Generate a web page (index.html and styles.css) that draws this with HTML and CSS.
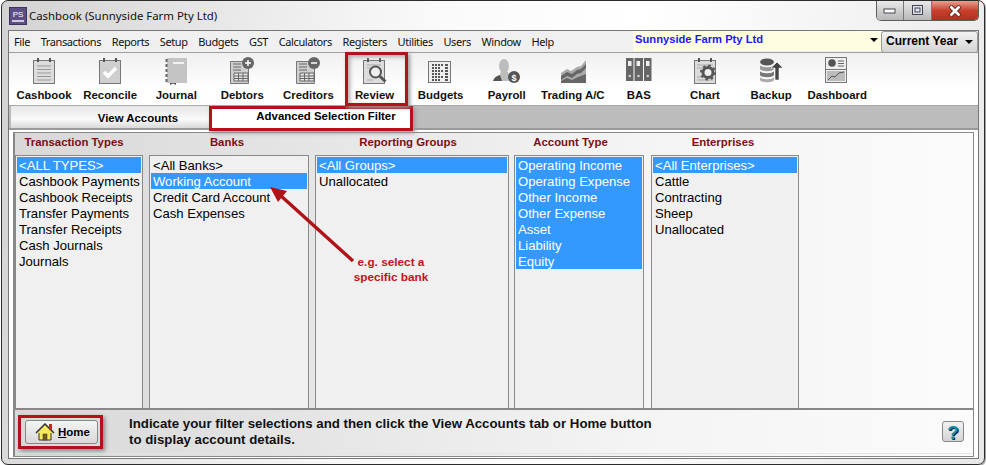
FILE: index.html
```html
<!DOCTYPE html>
<html lang="en">
<head>
<meta charset="utf-8">
<title>Cashbook</title>
<link rel="stylesheet" href="styles.css">
</head>
<body>
<div class="window">
  <header class="titlebar">
    <svg class="app-icon" width="18" height="18" viewBox="0 0 18 18"><rect x=".5" y=".5" width="17" height="17" fill="#5d4f86" stroke="#3c3360"/><text x="9" y="10" text-anchor="middle" font-family="Liberation Sans" font-size="8" fill="#fff">PS</text><rect x="3" y="13" width="12" height="2" fill="#cfc9de"/></svg>
    <span class="title">Cashbook (Sunnyside Farm Pty Ltd)</span>
    <div class="controls">
      <span class="ctl"><svg width="14" height="8" viewBox="0 0 14 8"><rect x="1" y="2" width="11" height="4" fill="#fff" stroke="#445"/></svg></span>
      <span class="ctl"><svg width="12" height="11" viewBox="0 0 12 11"><rect x=".5" y=".5" width="10" height="9" fill="#dfe4ea" stroke="#445"/><rect x="3" y="3" width="5" height="4" fill="none" stroke="#445"/></svg></span>
      <span class="ctl close"><svg width="14" height="12" viewBox="0 0 14 12"><path d="M2 1l10 10M12 1L2 11" stroke="#5b2018" stroke-width="4.4"/><path d="M2.5 1.5l9 9M11.500 1.500l-9 9" stroke="#fff" stroke-width="2.6"/></svg></span>
    </div>
  </header>
  <div class="frame">
    <nav class="menubar">
      <span class="m m1">File</span><span class="m">Transactions</span><span class="m">Reports</span><span class="m">Setup</span><span class="m">Budgets</span><span class="m">GST</span><span class="m">Calculators</span><span class="m">Registers</span><span class="m">Utilities</span><span class="m">Users</span><span class="m">Window</span><span class="m">Help</span>
      <div class="company"><span>Sunnyside Farm Pty Ltd</span><i class="caret"></i></div>
      <div class="year"><span>Current Year</span><i class="caret"></i></div>
    </nav>
    <div class="toolbar">
      <div class="tool"><svg width="28" height="28" viewBox="0 0 28 28"><rect x="3.500" y="3.500" width="21" height="23" fill="#dcdcdc" stroke="#777"/><path d="M8 1v4M20 1v4" stroke="#555" stroke-width="2"/><path d="M7 9h14M7 12.500h14M7 16h14M7 19.500h14M7 23h14" stroke="#999"/></svg><span>Cashbook</span></div>
      <div class="tool"><svg width="28" height="28" viewBox="0 0 28 28"><rect x="3.500" y="3.500" width="21" height="23" fill="#cfcfcf" stroke="#777"/><path d="M8 1v4M20 1v4" stroke="#555" stroke-width="2"/><path d="M8 15l4 4 8-8" fill="none" stroke="#fff" stroke-width="3.500"/></svg><span>Reconcile</span></div>
      <div class="tool"><svg width="28" height="28" viewBox="0 0 28 28"><rect x="5" y="1" width="20" height="25" fill="#c4c4c4"/><path d="M4.500 2v24" stroke="#666" stroke-width="2" stroke-dasharray="3 2"/><rect x="11" y="5" width="11" height="2" fill="#f2f2f2"/><path d="M8 26h6v2l-3-1.500-3 1.500z" fill="#555"/></svg><span>Journal</span></div>
      <div class="tool"><svg width="28" height="28" viewBox="0 0 28 28"><path d="M2.500 4.500h18v22h-18z" fill="#cfcfcf" stroke="#777"/><path d="M5 7h8M5 10h8M5 13h8" stroke="#666"/><path d="M6 16h14v8H6zM6 19h14M6 21.500h14M10.500 16v8M15 16v8" fill="#e6e6e6" stroke="#666"/><circle cx="20" cy="6" r="6" fill="#666"/><path d="M17 6h6M20 3v6" stroke="#fff" stroke-width="1.500"/></svg><span>Debtors</span></div>
      <div class="tool"><svg width="28" height="28" viewBox="0 0 28 28"><path d="M2.500 4.500h18v22h-18z" fill="#cfcfcf" stroke="#777"/><path d="M5 7h8M5 10h8M5 13h8" stroke="#666"/><path d="M6 16h14v8H6zM6 19h14M6 21.500h14M10.500 16v8M15 16v8" fill="#e6e6e6" stroke="#666"/><circle cx="20" cy="6" r="6" fill="#666"/><path d="M17 6h6" stroke="#fff" stroke-width="1.500"/></svg><span>Creditors</span></div>
      <div class="tool"><svg width="28" height="28" viewBox="0 0 28 28"><rect x="2.500" y="3.500" width="21" height="23" fill="#dcdcdc" stroke="#777"/><path d="M7 1v4M19 1v4" stroke="#555" stroke-width="2"/><path d="M6 8h14M6 11h6M6 23h6" stroke="#aaa"/><circle cx="14.500" cy="15" r="5.500" fill="#eee" stroke="#555" stroke-width="2"/><path d="M18.500 19l6 5.500" stroke="#555" stroke-width="3"/></svg><span>Review</span></div>
      <div class="tool"><svg width="28" height="28" viewBox="0 0 28 28"><rect x="1.500" y="4.500" width="22" height="21" fill="#eee" stroke="#777"/><path d="M5 8h2M8 8h2M11 8h2M14 8h2M18 8h3M5 11h2M8 11h2M11 11h2M18 11h3M5 14h2M8 14h2M11 14h2M14 14h2M18 14h3M5 17h2M8 17h2M11 17h2M18 17h3M5 20h2M8 20h2M11 20h2M14 20h2M18 20h3M5 23h2M8 23h2M11 23h2M18 23h3" stroke="#555" stroke-width="2"/></svg><span>Budgets</span></div>
      <div class="tool"><svg width="28" height="28" viewBox="0 0 28 28"><ellipse cx="11" cy="9" rx="5" ry="7" fill="#bdbdbd"/><path d="M8 14l-1 4c-4 1-6 3-7 6h19l-4-9z" fill="#bdbdbd"/><path d="M0 24c1-3 3-5 7-6l2 6z" fill="#555"/><circle cx="21" cy="20" r="6" fill="#555"/><text x="21" y="23.500" text-anchor="middle" font-family="Liberation Sans" font-size="9" font-weight="700" fill="#fff">$</text></svg><span>Payroll</span></div>
      <div class="tool"><svg width="28" height="28" viewBox="0 0 28 28"><path d="M2 16l6-4 4 2 6-4 4-1 5-6v23H2z" fill="#aaa"/><path d="M2 19l6-4 5 2 5-4 4-1 5-5v4l-5 5-4 1-5 4-5-2-6 4z" fill="#666"/><path d="M2 24l6-3 5 2 6-3 8-3v9H2z" fill="#666"/></svg><span>Trading A/C</span></div>
      <div class="tool"><svg width="28" height="28" viewBox="0 0 28 28"><path d="M1 1h7.500v23H1zM9.500 1H18v23H9.500zM19 1h7.500v23H19z" fill="#666"/><path d="M3 4h3.500v5H3zM11.500 4H15v5h-3.500zM21 4h3.500v5H21z" fill="#eee"/><circle cx="4.800" cy="19" r="1.300" fill="#ccc"/><circle cx="13.500" cy="19" r="1.300" fill="#ccc"/><circle cx="22.800" cy="19" r="1.300" fill="#ccc"/></svg><span>BAS</span></div>
      <div class="tool"><svg width="28" height="28" viewBox="0 0 28 28"><rect x="3.500" y="3.500" width="21" height="23" fill="#dcdcdc" stroke="#777"/><path d="M8 1v4M20 1v4" stroke="#555" stroke-width="2"/><path d="M6 8h16M6 11h16M6 20h16M6 23h16" stroke="#aaa"/><circle cx="17" cy="15.500" r="5" fill="#eee" stroke="#555" stroke-width="3"/><circle cx="17" cy="15.500" r="7" fill="none" stroke="#555" stroke-width="2" stroke-dasharray="2.500 3"/></svg><span>Chart</span></div>
      <div class="tool"><svg width="28" height="28" viewBox="0 0 28 28"><ellipse cx="10" cy="5" rx="7" ry="3.500" fill="#555"/><path d="M3 8c1 3 13 3 14 0v4c-1 3-13 3-14 0z" fill="#999"/><path d="M3 14c1 3 13 3 14 0v4c-1 3-13 3-14 0z" fill="#777"/><path d="M3 20c1 3 13 3 14 0v3c-1 3-13 3-14 0z" fill="#aaa"/><path d="M20 5l6 6h-4v12h-4V11h-4z" fill="#444" stroke="#fff" stroke-width=".6"/></svg><span>Backup</span></div>
      <div class="tool"><svg width="28" height="28" viewBox="0 0 28 28"><rect x="2.500" y=".5" width="21" height="25" fill="#eee" stroke="#777"/><path d="M2.500 12.500h21" stroke="#777"/><circle cx="9" cy="6" r="3.800" fill="#555"/><path d="M15 4h6M15 6.500h6M15 9h6" stroke="#666"/><rect x="4" y="14" width="18" height="10" fill="#bbb"/><path d="M5 23l4-4 3 1 4-4 5-1" fill="none" stroke="#555"/></svg><span>Dashboard</span></div>
    </div>
    <div class="tabs">
      <div class="tab">View Accounts</div>
      <div class="tab tab-active">Advanced Selection Filter</div>
    </div>
    <main class="panel">
      <div class="columns">
        <section class="col c-types"><h2>Transaction Types</h2>
          <ul class="list"><li class="sel">&lt;ALL TYPES&gt;</li><li>Cashbook Payments</li><li>Cashbook Receipts</li><li>Transfer Payments</li><li>Transfer Receipts</li><li>Cash Journals</li><li>Journals</li></ul></section>
        <section class="col c-banks"><h2>Banks</h2>
          <ul class="list"><li>&lt;All Banks&gt;</li><li class="sel">Working Account</li><li>Credit Card Account</li><li>Cash Expenses</li></ul></section>
        <section class="col c-groups"><h2>Reporting Groups</h2>
          <ul class="list"><li class="sel">&lt;All Groups&gt;</li><li>Unallocated</li></ul></section>
        <section class="col c-acct"><h2>Account Type</h2>
          <ul class="list"><li class="sel">Operating Income</li><li class="sel">Operating Expense</li><li class="sel">Other Income</li><li class="sel">Other Expense</li><li class="sel">Asset</li><li class="sel">Liability</li><li class="sel">Equity</li></ul></section>
        <section class="col c-ent"><h2>Enterprises</h2>
          <ul class="list"><li class="sel">&lt;All Enterprises&gt;</li><li>Cattle</li><li>Contracting</li><li>Sheep</li><li>Unallocated</li></ul></section>
      </div>
      <footer class="bottom">
        <div class="home-wrap"><button class="home" type="button"><svg width="20" height="18" viewBox="0 0 20 18"><path d="M4 9v8h12V9z" fill="#f5e85a" stroke="#333"/><path d="M1 10l9-9 9 9" fill="#f5e85a" stroke="#333" stroke-width="1.500"/><rect x="14" y="1" width="3" height="6" fill="#c22"/><rect x="8" y="11" width="4" height="6" fill="#7a5a20" stroke="#333" stroke-width=".5"/></svg><span><u>H</u>ome</span></button></div>
        <p class="hint">Indicate your filter selections and then click the View Accounts tab or Home button<br>to display account details.</p>
        <button class="help" type="button">?</button>
      </footer>
    </main>
  </div>
  <svg class="arrow" width="100" height="100" viewBox="0 0 100 100"><path d="M87 80L14 14" stroke="#b01218" stroke-width="3.400"/><path d="M4 6l17 4-9 11z" fill="#b01218"/></svg>
  <div class="note">e.g. select a<br>specific bank</div>
  <div class="callout call-review"></div>
</div>
</body>
</html>
```
FILE: styles.css
```css
* { box-sizing: border-box; }
html, body { margin: 0; padding: 0; background: #fff; }
body { width: 986px; height: 465px; overflow: hidden; font-family: "Liberation Sans", Arial, sans-serif; color: #000; }

.window {
  position: relative;
  width: 984px;
  height: 465px;
  margin-left: 1px;
  padding: 0 6px 6px 6px;
  border: 1px solid #2c2c2c;
  border-radius: 7px;
  background: linear-gradient(100deg, #d2d2d2 0%, #ececec 25%, #f9f9f9 40%, #fff 60%, #e8e8e8 100%);
  box-shadow: 1px 1px 1px #999;
}
.titlebar { display: flex; align-items: center; height: 29px; padding-left: 1px; }
.app-icon { flex: none; margin-right: 3px; margin-top: 1px; }
.title { font-family: "Noto Sans", sans-serif; font-size: 11.400px; color: #111; margin-left: -1px; }
.controls { display: flex; margin-left: auto; align-self: flex-start; height: 20px; border: 1px solid #5d5d5d; border-top: 0; border-radius: 0 0 5px 5px; overflow: hidden; margin-right: -1px; width: 103px; }
.ctl { display: flex; align-items: center; justify-content: center; width: 28px; background: linear-gradient(#e8e8e8, #d0d0d0 50%, #b8b8b8); border-right: 1px solid #777; }
.close { width: 47px; border: 0; background: linear-gradient(#e8a090, #c8402c 50%, #b03020); }

.frame { width: 971px; height: 429px; border: 1px solid #777; background: #fff; }
.menubar { display: flex; height: 22px; background: #f0f0f0; border-bottom: 1px solid #a0a0a0; font-family: "Noto Sans", sans-serif; font-size: 11px; align-items: center; padding-left: 5px; position: relative; }
.m { margin-right: 10.700px; letter-spacing: -.4px; color: #111; }
.company { display: flex; align-items: flex-start; justify-content: space-between; margin-left: auto; width: 248px; height: 20px; padding: 2px 3px 0 2px; background: #fdfde2; align-self: flex-start; font: 700 11.200px "Liberation Sans", sans-serif; color: #1a1aee; letter-spacing: 0; }
.year { display: flex; align-items: center; justify-content: space-between; width: 97px; height: 22px; align-self: flex-start; padding: 0 4px 2px; border: 1px solid #999; border-radius: 3px; background: linear-gradient(#f2f2f2, #d4d4d4); font: 700 12px "Liberation Sans", sans-serif; position: relative; }
.caret { width: 0; height: 0; margin-top: 5px; border: 4px solid transparent; border-top: 4px solid #000; border-bottom: 0; }
.year .caret { margin-top: 2px; }

.toolbar { display: flex; height: 53px; padding: 3px 0 0 2px; background: linear-gradient(#f0f0f0, #fff 70%); border-bottom: 1px solid #aaa; }
.tool { display: flex; flex-direction: column; align-items: center; width: 66.100px; font-weight: 700; font-size: 11.400px; color: #111; white-space: nowrap; }
.tool svg { display: block; height: 30px; margin-bottom: 3px; }

.tabs { display: flex; height: 24px; padding-left: 2px; background: #bcbcbc; border-bottom: 2px solid #9a9a9a; }
.tab { width: 198px; height: 22px; padding: 6px 0 0 56px; text-align: center; font-weight: 700; font-size: 11.400px; background: linear-gradient(#e6e6e6, #fafafa 60%, #d9d9d9); }
.tab-active { position: relative; width: 204px; height: 25px; padding: 1px 0 0 30px; background: #fff; border: 3px solid #b3121a; box-shadow: 2px 2px 4px #999; }

.panel { margin: 2px 4px 0 4px; height: 325px; border: 1px solid #888; background: linear-gradient(90deg, #d8d8d8, #f4f4f4 65%, #fbfbfb); border-left-width: 2px; }
.columns { display: flex; height: 277px; padding-left: 0; border-bottom: 2px solid #888; }
.col { display: flex; flex-direction: column; flex: none; margin-right: 6px; }
.col h2 { margin: 3px 0 0; height: 19px; text-align: center; font-size: 11.400px; font-weight: 700; color: #7b0f14; white-space: nowrap; }
.c-types { width: 128px; }
.c-types h2 { padding-right: 10px; }
.c-banks { width: 160px; }
.c-banks h2 { padding-right: 4px; }
.c-groups { width: 194px; margin-right: 5px; }
.c-groups h2 { padding-right: 8px; }
.c-acct { width: 130px; margin-right: 7px; }
.c-acct h2 { padding-right: 17px; }
.c-ent { width: 148px; }
.c-ent h2 { padding-right: 4px; }
.list { flex: 1; margin: 0; padding: 1px; list-style: none; background: #f0f0f0; border: 1px solid #8a8a8a; border-bottom: 0; font-size: 13.100px; }
.list li { height: 16px; line-height: 18px; padding-left: 2px; white-space: nowrap; }
.list li.sel { background: #3399ff; color: #fff; }

.bottom { display: flex; align-items: center; height: 44px; padding: 0 9px 0 3px; border-bottom: 1px solid #e4e4e4; }
.home-wrap { flex: none; width: 85px; height: 34px; padding: 2px 4px; border: 3px solid #b3121a; box-shadow: 2px 2px 4px #888; margin-right: 26px; margin-top: 0; }
.home { display: flex; align-items: center; gap: 3px; width: 73px; height: 24px; padding: 0 0 0 9px; border: 1px solid #888; border-radius: 3px; background: linear-gradient(#f4f4f4, #d8d8d8); font: 700 11.500px "Liberation Sans", sans-serif; }
.hint { flex: none; margin: 0; font-size: 13.270px; font-weight: 700; line-height: 16px; color: #111; }
.help { margin-left: auto; width: 22px; height: 21px; padding: 0; border: 1px solid #888; border-radius: 3px; background: linear-gradient(#f2f2f2, #d4d4d4); font: 700 19px "Liberation Sans", sans-serif; color: #0a8fa8; text-shadow: 1px 1px 0 #124; }

.arrow { position: absolute; left: 264px; top: 180px; }
.note { position: absolute; left: 339px; top: 254px; width: 100px; text-align: center; font-size: 11.800px; line-height: 15px; font-weight: 700; color: #c3141c; }
.callout { position: absolute; border: 3px solid #b3121a; box-shadow: 2px 2px 4px #999, inset 2px 2px 4px #aaa; pointer-events: none; }
.call-review { left: 343px; top: 51px; width: 63px; height: 54px; }
```
